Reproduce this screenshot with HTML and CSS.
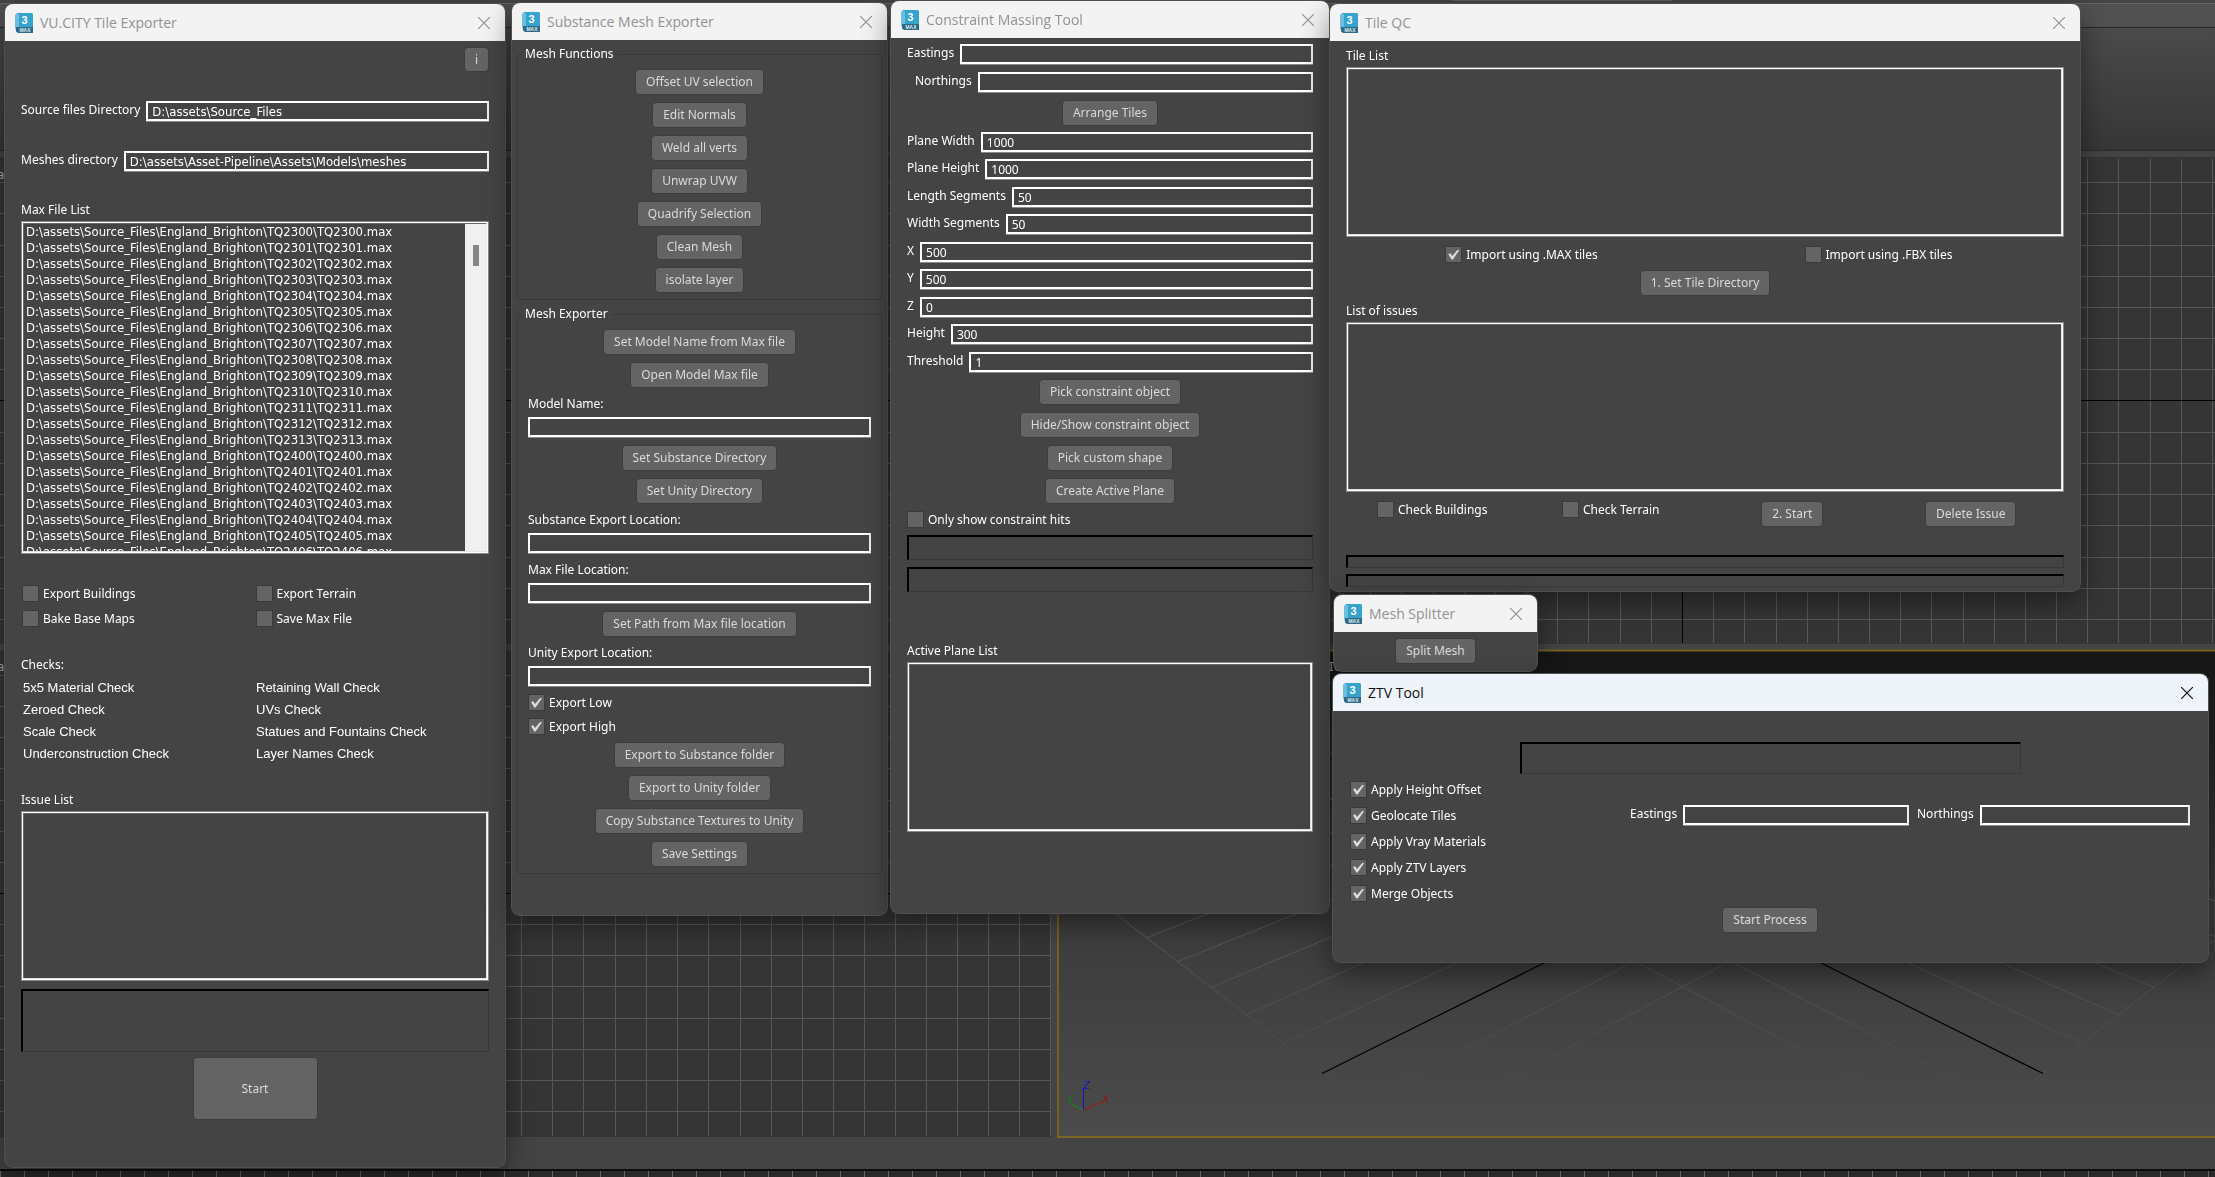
FILE: index.html
```html
<!DOCTYPE html>
<html lang="en">
<head>
<meta charset="utf-8">
<title>VU.CITY 3ds Max tools</title>
<link rel="stylesheet" href="styles.css">
</head>
<body>
<svg class="symbols" aria-hidden="true">
  <symbol id="app" viewBox="0 0 18 20">
    <path d="M0 2 2 0V18L0 16Z" fill="#7cc4df"/>
    <path d="M2 0H16.500Q18 0 18 1.500V14.500H2Z" fill="#35a3cd"/>
    <path d="M0 2 2 1H4V14.500H0Z" fill="#6dbddc"/>
    <path d="M1 14H18V20H3L1 18.500Z" fill="#2f6a85"/>
    <text x="9.500" y="11" text-anchor="middle" class="app-num">3</text>
    <text x="10" y="19" text-anchor="middle" class="app-max">MAX</text>
  </symbol>
  <symbol id="close" viewBox="0 0 12 12">
    <path d="M0 0 12 12M12 0 0 12" stroke="currentColor" stroke-width="1.200" fill="none"/>
  </symbol>
</svg>

<svg class="backdrop" aria-hidden="true">
  <defs>
    <linearGradient id="ribbon" x1="0" y1="0" x2="0" y2="1"><stop offset="0" stop-color="#4a4a4a"/><stop offset="1" stop-color="#363636"/></linearGradient>
    <linearGradient id="sky" x1="0" y1="0" x2="0" y2="1"><stop offset="0" stop-color="#161616"/><stop offset=".5" stop-color="#3a3a3a"/><stop offset="1" stop-color="#4b4b4b"/></linearGradient>
    <linearGradient id="fade" gradientUnits="userSpaceOnUse" x1="0" y1="900" x2="0" y2="1112"><stop offset="0" stop-color="#5c5c5c"/><stop offset="1" stop-color="#5c5c5c" stop-opacity="0"/></linearGradient>
    <pattern id="ticks" width="24" height="10" patternUnits="userSpaceOnUse"><path d="M.5 0V10" stroke="#666"/></pattern>
  </defs>
  <rect width="100%" height="100%" fill="#444"/>
  <rect y="3" width="100%" height="24" fill="#515151"/>
  <rect y="3" width="100%" height="1" fill="#666"/>
  <rect x="1453" width="219" height="1" fill="#5c5c5c"/>
  <rect y="27" width="100%" height="1" fill="#282828"/>
  <rect y="28" width="100%" height="122" fill="url(#ribbon)"/>
  <rect y="150" width="100%" height="1" fill="#2a2a2a"/>
  <rect y="157" width="100%" height="487" fill="#353535"/>
  <rect y="651" width="1051" height="486" fill="#353535"/>
  <path class="grid-line" d="M0 182.500H2215M0 213.500H2215M0 245.500H2215M0 276.500H2215M0 307.500H2215M0 338.500H2215M0 369.500H2215M0 432.500H2215M0 463.500H2215M0 494.500H2215M0 525.500H2215M0 557.500H2215M0 588.500H2215M0 619.500H2215"/>
  <path class="grid-line" d="M1339.500 159V643M1370.500 159V643M1401.500 159V643M1433.500 159V643M1464.500 159V643M1495.500 159V643M1526.500 159V643M1557.500 159V643M1588.500 159V643M1620.500 159V643M1651.500 159V643M1713.500 159V643M1744.500 159V643M1776.500 159V643M1807.500 159V643M1838.500 159V643M1869.500 159V643M1900.500 159V643M1931.500 159V643M1963.500 159V643M1994.500 159V643M2025.500 159V643M2056.500 159V643M2087.500 159V643M2118.500 159V643M2150.500 159V643M2181.500 159V643M2212.500 159V643"/>
  <path class="grid-line" d="M0 675.500H1050M0 706.500H1050M0 737.500H1050M0 768.500H1050M0 800.500H1050M0 831.500H1050M0 862.500H1050M0 924.500H1050M0 955.500H1050M0 986.500H1050M0 1018.500H1050M0 1049.500H1050M0 1080.500H1050M0 1111.500H1050"/>
  <path class="grid-line" d="M521.500 651V1136M552.500 651V1136M583.500 651V1136M615.500 651V1136M646.500 651V1136M677.500 651V1136M708.500 651V1136M740.500 651V1136M771.500 651V1136M802.500 651V1136M833.500 651V1136M864.500 651V1136M895.500 651V1136M926.500 651V1136M957.500 651V1136M988.500 651V1136M1019.500 651V1136M1050.500 651V1136"/>
  <path d="M0 400.500H2215M1682.500 159V643M0 893.500H1050" stroke="#000"/>
  <rect x="1058" y="650" width="100%" height="487" fill="url(#sky)"/>
  <g stroke="url(#fade)" fill="none">
    <path d="M1116 914 1400 1133M1116 914 1500 769M1146 938 1600 760M1177 962 1700 751M1210 988 1800 739M1246 1015 1900 725M1283 1043 2000 713M1362 1103 2100 719M1404 1135 2200 711"/>
    <path d="M2249 914 1965 1133M2249 914 1865 769M2219 938 1765 760M2188 962 1665 751M2155 988 1565 739M2119 1015 1465 725M2082 1043 1365 713M2003 1103 1265 719M1961 1135 1165 711"/>
  </g>
  <path d="M1546 962 1322 1073.500M1819 962 2043 1073.500" stroke="#000" stroke-width="1.200"/>
  <path d="M1058 1200V650.500H2300" stroke="#75601f" stroke-width="2" fill="none"/>
  <rect y="1138" width="100%" height="31" fill="#444"/>
  <rect x="1057" y="1136" width="100%" height="2" fill="#7d6524"/>
  <path d="M1083.500 1110V1089" stroke="#1010d0"/>
  <path d="M1083.500 1110 1104 1101" stroke="#b01010"/>
  <path d="M1083.500 1110 1069 1103" stroke="#109010"/>
  <text x="1083" y="1089" class="axis" fill="#1414c8">Z</text>
  <text x="1102" y="1103" class="axis" fill="#8c1414">X</text>
  <text x="1066" y="1103" class="axis" fill="#147814">Y</text>
  <rect y="1169" width="100%" height="2" fill="#0c0c0c"/>
  <rect y="1171" width="100%" height="10" fill="#2a2a2a"/>
  <rect y="1171" width="100%" height="10" fill="url(#ticks)"/>
  <text x="-3" y="179" class="viewport-name">a</text>
  <text x="-3" y="671" class="viewport-name">a</text>
  <text x="1329" y="671" class="viewport-name">IG...</text>
</svg>

<main class="desktop">
<section class="window win-exporter" aria-label="VU.CITY Tile Exporter">
  <header class="titlebar"><svg class="app-icon"><use href="#app"/></svg><h2>VU.CITY Tile Exporter</h2><button class="close" aria-label="Close"><svg><use href="#close"/></svg></button></header>
  <div class="body">
    <button class="btn info">i</button>
    <div class="field spaced"><label for="src">Source files Directory</label><input id="src" class="path" type="text" value="D:\assets\Source_Files"></div>
    <div class="field spaced"><label for="mesh">Meshes directory</label><input id="mesh" class="path" type="text" value="D:\assets\Asset-Pipeline\Assets\Models\meshes"></div>
    <h3 class="spaced">Max File List</h3>
    <div class="list file-list">
      <ul class="path">
        <li>D:\assets\Source_Files\England_Brighton\TQ2300\TQ2300.max</li>
        <li>D:\assets\Source_Files\England_Brighton\TQ2301\TQ2301.max</li>
        <li>D:\assets\Source_Files\England_Brighton\TQ2302\TQ2302.max</li>
        <li>D:\assets\Source_Files\England_Brighton\TQ2303\TQ2303.max</li>
        <li>D:\assets\Source_Files\England_Brighton\TQ2304\TQ2304.max</li>
        <li>D:\assets\Source_Files\England_Brighton\TQ2305\TQ2305.max</li>
        <li>D:\assets\Source_Files\England_Brighton\TQ2306\TQ2306.max</li>
        <li>D:\assets\Source_Files\England_Brighton\TQ2307\TQ2307.max</li>
        <li>D:\assets\Source_Files\England_Brighton\TQ2308\TQ2308.max</li>
        <li>D:\assets\Source_Files\England_Brighton\TQ2309\TQ2309.max</li>
        <li>D:\assets\Source_Files\England_Brighton\TQ2310\TQ2310.max</li>
        <li>D:\assets\Source_Files\England_Brighton\TQ2311\TQ2311.max</li>
        <li>D:\assets\Source_Files\England_Brighton\TQ2312\TQ2312.max</li>
        <li>D:\assets\Source_Files\England_Brighton\TQ2313\TQ2313.max</li>
        <li>D:\assets\Source_Files\England_Brighton\TQ2400\TQ2400.max</li>
        <li>D:\assets\Source_Files\England_Brighton\TQ2401\TQ2401.max</li>
        <li>D:\assets\Source_Files\England_Brighton\TQ2402\TQ2402.max</li>
        <li>D:\assets\Source_Files\England_Brighton\TQ2403\TQ2403.max</li>
        <li>D:\assets\Source_Files\England_Brighton\TQ2404\TQ2404.max</li>
        <li>D:\assets\Source_Files\England_Brighton\TQ2405\TQ2405.max</li>
        <li>D:\assets\Source_Files\England_Brighton\TQ2406\TQ2406.max</li>
      </ul>
      <div class="scrollbar"><div class="thumb"></div></div>
    </div>
    <div class="options">
      <label class="check"><input type="checkbox">Export Buildings</label>
      <label class="check"><input type="checkbox">Export Terrain</label>
      <label class="check"><input type="checkbox">Bake Base Maps</label>
      <label class="check"><input type="checkbox">Save Max File</label>
    </div>
    <h3 class="checks-title">Checks:</h3>
    <ul class="checks">
      <li>5x5 Material Check</li><li>Retaining Wall Check</li>
      <li>Zeroed Check</li><li>UVs Check</li>
      <li>Scale Check</li><li>Statues and Fountains Check</li>
      <li>Underconstruction Check</li><li>Layer Names Check</li>
    </ul>
    <h3 class="issues-title">Issue List</h3>
    <div class="list"></div>
    <div class="progress tall"></div>
    <button class="btn start">Start</button>
  </div>
</section>

<section class="window win-substance" aria-label="Substance Mesh Exporter">
  <header class="titlebar"><svg class="app-icon"><use href="#app"/></svg><h2>Substance Mesh Exporter</h2><button class="close" aria-label="Close"><svg><use href="#close"/></svg></button></header>
  <div class="groups">
    <fieldset>
      <legend>Mesh Functions</legend>
      <div class="stack">
        <button class="btn">Offset UV selection</button>
        <button class="btn">Edit Normals</button>
        <button class="btn">Weld all verts</button>
        <button class="btn">Unwrap UVW</button>
        <button class="btn">Quadrify Selection</button>
        <button class="btn">Clean Mesh</button>
        <button class="btn">isolate layer</button>
      </div>
    </fieldset>
    <fieldset>
      <legend>Mesh Exporter</legend>
      <div class="stack">
        <button class="btn">Set Model Name from Max file</button>
        <button class="btn">Open Model Max file</button>
        <div class="field-block"><label for="model">Model Name:</label><input id="model" type="text"></div>
        <button class="btn">Set Substance Directory</button>
        <button class="btn">Set Unity Directory</button>
        <div class="field-block"><label for="subloc">Substance Export Location:</label><input id="subloc" type="text"></div>
        <div class="field-block"><label for="maxloc">Max File Location:</label><input id="maxloc" type="text"></div>
        <button class="btn">Set Path from Max file location</button>
        <div class="field-block"><label for="uniloc">Unity Export Location:</label><input id="uniloc" type="text"></div>
        <label class="check left"><input type="checkbox" checked>Export Low</label>
        <label class="check left"><input type="checkbox" checked>Export High</label>
        <button class="btn">Export to Substance folder</button>
        <button class="btn">Export to Unity folder</button>
        <button class="btn">Copy Substance Textures to Unity</button>
        <button class="btn">Save Settings</button>
      </div>
    </fieldset>
  </div>
</section>

<section class="window win-massing" aria-label="Constraint Massing Tool">
  <header class="titlebar"><svg class="app-icon"><use href="#app"/></svg><h2>Constraint Massing Tool</h2><button class="close" aria-label="Close"><svg><use href="#close"/></svg></button></header>
  <div class="body stack">
    <div class="field"><label for="m-e">Eastings</label><input id="m-e" type="text"></div>
    <div class="field indent"><label for="m-n">Northings</label><input id="m-n" type="text"></div>
    <button class="btn">Arrange Tiles</button>
    <div class="fields">
      <div class="field"><label for="pw">Plane Width</label><input id="pw" type="text" value="1000"></div>
      <div class="field"><label for="ph">Plane Height</label><input id="ph" type="text" value="1000"></div>
      <div class="field"><label for="ls">Length Segments</label><input id="ls" type="text" value="50"></div>
      <div class="field"><label for="ws">Width Segments</label><input id="ws" type="text" value="50"></div>
      <div class="field"><label for="px">X</label><input id="px" type="text" value="500"></div>
      <div class="field"><label for="py">Y</label><input id="py" type="text" value="500"></div>
      <div class="field"><label for="pz">Z</label><input id="pz" type="text" value="0"></div>
      <div class="field"><label for="hh">Height</label><input id="hh" type="text" value="300"></div>
      <div class="field"><label for="th">Threshold</label><input id="th" type="text" value="1"></div>
    </div>
    <button class="btn">Pick constraint object</button>
    <button class="btn">Hide/Show constraint object</button>
    <button class="btn">Pick custom shape</button>
    <button class="btn">Create Active Plane</button>
    <label class="check left"><input type="checkbox">Only show constraint hits</label>
    <div class="progress"></div>
    <div class="progress"></div>
    <div class="plane-list"><h3>Active Plane List</h3><div class="list"></div></div>
  </div>
</section>

<section class="window win-qc" aria-label="Tile QC">
  <header class="titlebar"><svg class="app-icon"><use href="#app"/></svg><h2>Tile QC</h2><button class="close" aria-label="Close"><svg><use href="#close"/></svg></button></header>
  <div class="body">
    <h3>Tile List</h3>
    <div class="list"></div>
    <div class="cols two">
      <label class="check"><input type="checkbox" checked>Import using .MAX tiles</label>
      <label class="check"><input type="checkbox">Import using .FBX tiles</label>
    </div>
    <button class="btn">1. Set Tile Directory</button>
    <h3 class="issues">List of issues</h3>
    <div class="list"></div>
    <div class="cols four">
      <label class="check"><input type="checkbox">Check Buildings</label>
      <label class="check"><input type="checkbox">Check Terrain</label>
      <button class="btn">2. Start</button>
      <button class="btn">Delete Issue</button>
    </div>
    <div class="bars"><div class="progress thin"></div><div class="progress thin"></div></div>
  </div>
</section>

<section class="window win-splitter" aria-label="Mesh Splitter">
  <header class="titlebar"><svg class="app-icon"><use href="#app"/></svg><h2>Mesh Splitter</h2><button class="close" aria-label="Close"><svg><use href="#close"/></svg></button></header>
  <div class="body"><button class="btn">Split Mesh</button></div>
</section>

<section class="window active win-ztv" aria-label="ZTV Tool">
  <header class="titlebar"><svg class="app-icon"><use href="#app"/></svg><h2>ZTV Tool</h2><button class="close" aria-label="Close"><svg><use href="#close"/></svg></button></header>
  <div class="body">
    <div class="progress"></div>
    <div class="ztv-grid">
      <div class="ztv-checks">
        <label class="check"><input type="checkbox" checked>Apply Height Offset</label>
        <label class="check"><input type="checkbox" checked>Geolocate Tiles</label>
        <label class="check"><input type="checkbox" checked>Apply Vray Materials</label>
        <label class="check"><input type="checkbox" checked>Apply ZTV Layers</label>
        <label class="check"><input type="checkbox" checked>Merge Objects</label>
      </div>
      <div class="ztv-fields">
        <div class="field"><label for="z-e">Eastings</label><input id="z-e" type="text"></div>
        <div class="field"><label for="z-n">Northings</label><input id="z-n" type="text"></div>
      </div>
    </div>
    <button class="btn">Start Process</button>
  </div>
</section>
</main>
</body>
</html>
```
FILE: styles.css
```css
* { box-sizing: border-box; }

body {
  margin: 0;
  min-height: 100vh;
  overflow: hidden;
  background: #444;
  color: #fff;
  font: 12px/18px "Noto Sans", sans-serif;
}

button, input { font: inherit; color: inherit; }
ul { list-style: none; margin: 0; padding: 0; }
h2, h3 { margin: 0; font: inherit; }

.symbols { position: absolute; width: 0; height: 0; }
.app-num { font: bold 11px "Liberation Sans", sans-serif; fill: #fff; }
.app-max { font: bold 5px "Liberation Sans", sans-serif; fill: #dcebf2; }

/* 3D viewports behind the tool windows */
.backdrop { position: fixed; inset: 0; width: 100%; height: 100%; }
.grid-line { stroke: #585858; fill: none; }
.axis { font: italic 11px "Liberation Sans", sans-serif; }
.viewport-name { font: 13px "Noto Sans", sans-serif; fill: #aaa; }

/* Tool windows */
.window {
  position: absolute;
  display: flex;
  flex-direction: column;
  background: #444;
  border-radius: 8px;
  box-shadow: 0 0 0 1px #505050, 0 10px 28px rgba(0, 0, 0, .45);
}
.win-exporter { left: 5px; top: 4px; width: 500px; }
.win-substance { left: 512px; top: 3px; width: 375px; }
.win-massing { left: 891px; top: 1px; width: 438px; }
.win-qc { left: 1330px; top: 4px; width: 750px; }
.win-splitter { left: 1334px; top: 595px; width: 203px; }
.win-ztv { left: 1333px; top: 674px; width: 875px; }

.titlebar {
  display: flex;
  align-items: center;
  height: 37px;
  padding: 0 15px 0 10px;
  background: #f3f3f3;
  color: #929292;
  border-radius: 8px 8px 0 0;
}
.active .titlebar { background: #eff3fa; color: #111; }
.titlebar h2 { flex: 1; padding-left: 7px; font: 14px/20px "Open Sans", sans-serif; white-space: nowrap; }
.app-icon { width: 18px; height: 20px; }
.close { display: flex; padding: 0; border: 0; background: none; }
.close svg { width: 12px; height: 12px; }

.body { display: flex; flex-direction: column; padding: 0 16px; }
.win-exporter .body { padding-top: 6px; padding-bottom: 47px; }
.win-massing .body { padding-top: 6px; padding-bottom: 81px; }
.win-qc .body { padding-top: 6px; padding-bottom: 4px; }
.win-splitter .body { padding-top: 6px; padding-bottom: 7px; }
.win-ztv .body { padding: 31px 18px 29px 17px; }

/* Controls */
.btn {
  align-self: center;
  height: 26px;
  padding: 0 10px;
  background: #646464;
  color: #dadada;
  border: 1px solid #3d3d3d;
  border-radius: 4px;
  white-space: nowrap;
}
.info { align-self: flex-end; width: 25px; height: 25px; padding: 0; }
.start { width: 125px; height: 63px; margin-top: 5px; }

input[type="text"] {
  min-width: 0;
  height: 20px;
  margin: 0 0 1px;
  padding: 0 4px;
  background: #444;
  border: 2px solid #fff;
  border-right-color: #ececec;
  border-radius: 0;
  box-shadow: 0 1px #8a8a8a;
}

.path { font: 13px/16px "DejaVu Sans Condensed", "DejaVu Sans", sans-serif; }

.field { display: flex; align-items: flex-start; gap: 6px; white-space: nowrap; }
.field input { flex: 1; }
.indent { padding-left: 8px; }
.spaced { margin-top: 29px; }
.field-block { display: flex; flex-direction: column; gap: 4px; }

.check { display: flex; align-items: center; gap: 4px; height: 17px; white-space: nowrap; }
.check input {
  appearance: none;
  display: grid;
  place-items: center;
  width: 17px;
  height: 17px;
  margin: 0;
  background: #646464;
  border: 1px solid #3a3a3a;
}
.check input:checked::before {
  content: "";
  width: 11px;
  height: 10px;
  background: #dcdcdc;
  clip-path: polygon(0 45%, 20% 38%, 36% 64%, 88% 0, 100% 8%, 42% 100%, 30% 100%);
}

.list {
  height: 170px;
  margin-top: 2px;
  border: 1px solid #828790;
  box-shadow: inset 0 0 0 1px #fff, inset -2px -2px #e3e3e3, inset 2px 2px #696969;
}
.file-list { display: flex; justify-content: space-between; height: 333px; padding: 2px 1px 2px 4px; }
.file-list ul { overflow: hidden; }
.scrollbar { width: 22px; padding: 21px 8px; background: #f0f0f0; }
.thumb { height: 21px; width: 6px; background: #858585; }

.progress {
  height: 25px;
  border: solid #383838;
  border-width: 2px 1px 1px 2px;
  border-top-color: #000;
  border-left-color: #000;
}
.tall { height: 63px; margin-top: 8px; }
.thin { height: 13px; }

/* Tile exporter */
.options { display: grid; grid-template-columns: 1fr 1fr; gap: 8px 0; margin-top: 31px; padding-left: 1px; }
.checks-title { margin-top: 29px; }
.checks { display: grid; grid-template-columns: 1fr 1fr; margin-top: 3px; padding-left: 2px; font: 13px/22px "Liberation Sans", sans-serif; }
.issues-title { margin-top: 26px; }

/* Substance exporter */
.groups { padding: 5px 5px 41px; }
fieldset { min-width: 0; margin: 0 0 5px; padding: 6px 3px; border: 1px solid #393939; border-radius: 3px; }
fieldset:last-child { margin-bottom: 0; }
legend { padding: 0 4px; }
.stack { display: flex; flex-direction: column; gap: 7px; }
fieldset .stack { padding: 0 7px; }
.left { align-self: flex-start; }

/* Massing tool */
.fields { display: flex; flex-direction: column; gap: 6px; margin: -1px 0; }
.fields .field:nth-child(2n + 3) { margin-top: 1px; }
.plane-list { margin-top: 43px; }

/* Tile QC */
.cols { display: grid; justify-items: center; padding-right: 4px; }
.cols .check { padding-right: 6px; }
.two { grid-template-columns: repeat(2, 1fr); margin: 9px 0 7px; }
.four { grid-template-columns: repeat(4, 1fr); margin: 9px 0 28px; }
.issues { margin-top: 6px; }
.bars { display: grid; gap: 6px; }

/* ZTV tool */
.win-ztv .progress { align-self: center; width: 501px; height: 32px; }
.ztv-grid { display: grid; grid-template-columns: 1fr 2fr; margin: 7px 0 5px; }
.ztv-checks { display: grid; gap: 9px; }
.ztv-fields { display: flex; align-items: flex-start; gap: 8px; padding-top: 24px; }
.ztv-fields .field { flex: 1; }
.ztv-fields .field:first-child { flex-basis: 6px; }
```
